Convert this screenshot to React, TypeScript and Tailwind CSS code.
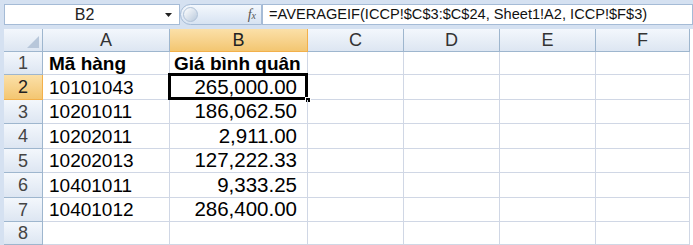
import React from "react";

const cols = ["A", "B", "C", "D", "E", "F"];

const rows: [string, string][] = [
  ["Mã hàng", "Giá bình quân"],
  ["10101043", "265,000.00"],
  ["10201011", "186,062.50"],
  ["10202011", "2,911.00"],
  ["10202013", "127,222.33"],
  ["10401011", "9,333.25"],
  ["10401012", "286,400.00"],
  ["", ""],
];

const headBg = "bg-gradient-to-b from-[#f3f7fc] to-[#dde6f2]";
const selBg = "bg-gradient-to-b from-[#fbe0a8] to-[#f3c671]";

export default function App() {
  return (
    <div className="w-[693px] h-[245px] overflow-hidden bg-[#d5e1f1] font-['Liberation_Sans',Arial,sans-serif] text-black">
      {/* formula bar */}
      <div className="flex h-[25px] pt-[4px] pl-[4px]">
        <div className="flex w-[176px] items-center border border-[#a5bbd6] bg-white">
          <div className="flex-1 text-center text-[16px] leading-none text-[#222]">B2</div>
          <svg width="9" height="6" viewBox="0 0 9 6" className="mr-[6px]">
            <path d="M1 1h7L4.5 5z" fill="#222" />
          </svg>
        </div>
        <div className="relative flex w-[82px] items-center justify-end rounded-l-full border border-[#a5bbd6] bg-gradient-to-b from-[#f4f8fd] to-[#d7e3f2] pr-[5px]">
          <div className="absolute left-[2px] top-[2px] h-[15px] w-[15px] rounded-full bg-gradient-to-br from-[#ffffff] to-[#b9c9dc] border border-[#b0c2d8]" />
          <span className="font-['Liberation_Serif',serif] text-[14px] italic leading-none text-[#555]">
            f<span className="text-[10px]">x</span>
          </span>
        </div>
        <div className="flex flex-1 items-center border border-[#a5bbd6] bg-white pl-[6px] text-[14.6px] leading-none whitespace-nowrap text-[#111]">
          =AVERAGEIF(ICCP!$C$3:$C$24, Sheet1!A2, ICCP!$F$3)
        </div>
      </div>

      {/* sheet */}
      <div className="mt-[4px] ml-[4px] grid grid-cols-[39px_127px_138px_96px_96px_96px_94px] grid-rows-[23px_23px_25px_24px_25px_24px_25px_24px_23px] bg-white">
        {/* header row */}
        <div className={`relative border-r border-b border-[#9eb6ce] ${headBg}`}>
          <svg width="12" height="12" viewBox="0 0 12 12" className="absolute right-[3px] bottom-[3px]">
            <path d="M12 0v12H0z" fill="#b8c7da" />
          </svg>
        </div>
        {cols.map((c) => (
          <div
            key={c}
            className={`flex items-center justify-center border-r border-b text-[18px] leading-none ${
              c === "B" ? `${selBg} border-[#f2b04b] text-[#222]` : `${headBg} border-[#9eb6ce] text-[#333]`
            }`}
          >
            {c}
          </div>
        ))}

        {rows.map((r, i) => {
          const n = i + 1;
          return (
            <React.Fragment key={n}>
              <div
                className={`flex items-center justify-center border-r border-b text-[18px] leading-none ${
                  n === 2 ? `${selBg} border-[#f2b04b] text-[#222]` : `${headBg} border-[#9eb6ce] text-[#444]`
                }`}
              >
                {n}
              </div>
              <div
                className={`flex items-center border-r border-b border-[#d0d7e5] pl-[6px] text-[19px] leading-none ${
                  n === 1 ? "font-bold" : ""
                }`}
              >
                {r[0]}
              </div>
              <div
                className={`relative flex items-center border-r border-b border-[#d0d7e5] leading-none ${
                  n === 1 ? "justify-start pl-[4px] text-[19px] font-bold" : "justify-end pr-[10px] text-[20.5px]"
                }`}
              >
                {r[1]}
                {n === 2 && (
                  <>
                    <div className="absolute -left-[2px] -top-[2px] -right-[1px] -bottom-[1px] border-[3px] border-black" />
                    <div className="absolute -right-[4px] -bottom-[4px] h-[6px] w-[6px] border border-white bg-black" />
                  </>
                )}
              </div>
              {[0, 1, 2, 3].map((k) => (
                <div key={k} className="border-r border-b border-[#d0d7e5]" />
              ))}
            </React.Fragment>
          );
        })}
      </div>
    </div>
  );
}
